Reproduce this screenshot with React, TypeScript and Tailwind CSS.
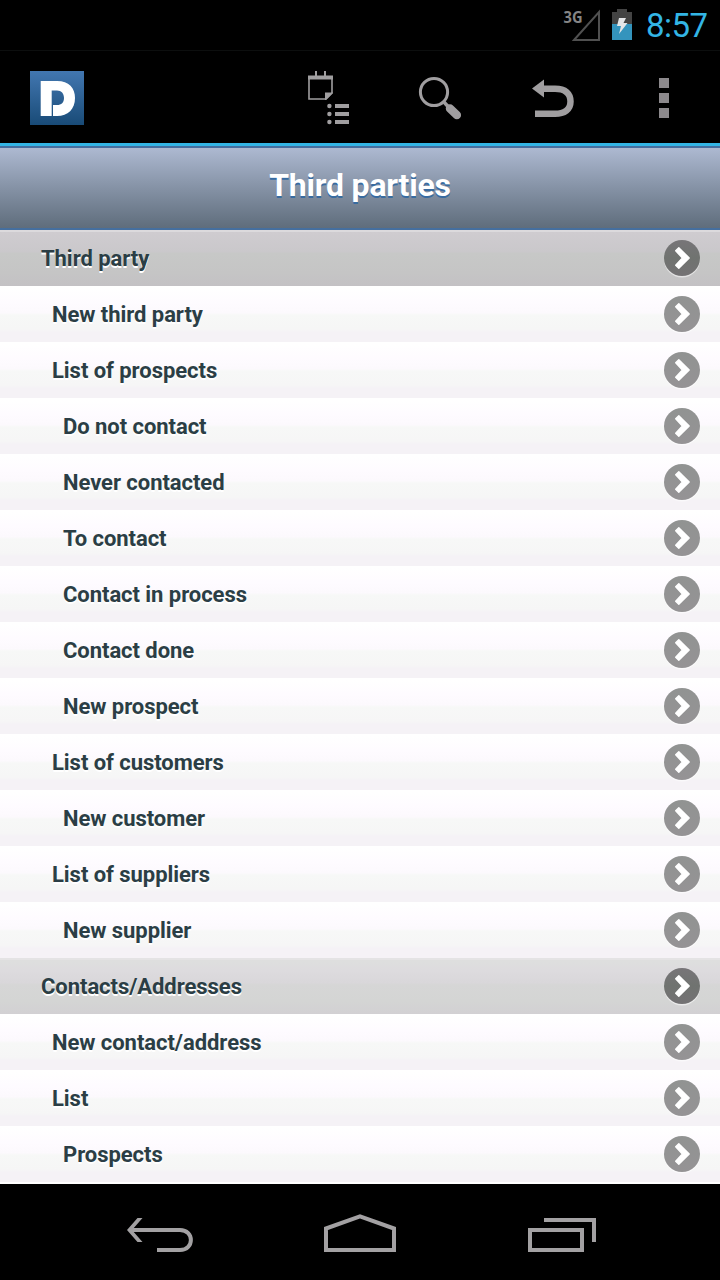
type Row = { label: string; level: 0 | 1 | 2; tone?: "active" | "section" };

const rows: Row[] = [
  { label: "Third party", level: 0, tone: "active" },
  { label: "New third party", level: 1 },
  { label: "List of prospects", level: 1 },
  { label: "Do not contact", level: 2 },
  { label: "Never contacted", level: 2 },
  { label: "To contact", level: 2 },
  { label: "Contact in process", level: 2 },
  { label: "Contact done", level: 2 },
  { label: "New prospect", level: 2 },
  { label: "List of customers", level: 1 },
  { label: "New customer", level: 2 },
  { label: "List of suppliers", level: 1 },
  { label: "New supplier", level: 2 },
  { label: "Contacts/Addresses", level: 0, tone: "section" },
  { label: "New contact/address", level: 1 },
  { label: "List", level: 1 },
  { label: "Prospects", level: 2 },
];

const indents = ["pl-[41px]", "pl-[52px]", "pl-[63px]"];

const tones = {
  active: "border-t-2 border-[#dcdadd] bg-[linear-gradient(#cfccd0,#cac8cb_36%,#c7c8c7_40%,#c5c5c5_75%,#c3c1c4)]",
  section: "border-t-2 border-[#e4e3e4] bg-[linear-gradient(#dedfde,#dddbde_20%,#d9d7da_42%,#d6d6d6_46%,#d4d5d4_75%,#d2d0d3)]",
  plain: "border-t-2 border-white bg-[linear-gradient(#fff,#fefbff_28%,#fcf9fd_46%,#f7f8f7_50%,#f6f6f6_76%,#f5f2f6_82%,#f5f2f6)]",
};

function StatusBar() {
  return (
    <div className="flex h-[51px] shrink-0 items-start border-b border-[#0c0e0e] pl-[563px]">
      <svg className="mt-1 h-[38px] w-[38px] overflow-visible" viewBox="0 -4 38 38">
        <path d="M11 32 36 4V32Z" fill="none" stroke="#505050" strokeWidth="2" />
        <text x="0.500" y="14.500" fill="#858585" fontFamily="'Open Sans', sans-serif" fontWeight="700" fontSize="16" textLength="19" lengthAdjust="spacingAndGlyphs">3G</text>
      </svg>
      <svg className="mt-[9px] ml-[11px] h-[31px] w-5" viewBox="0 0 20 31">
        <path d="M0 3H5V0H15V3H20V15H0Z" fill="#434343" />
        <path d="M0 15H20V31H0Z" fill="#3494bd" />
        <path d="M7 9H14L11.500 14H15.500L7 25L9 17H5Z" fill="#e4e6e8" />
      </svg>
      <span className="mt-[7px] ml-[14px] text-[33px] leading-[38px] font-normal tracking-[-0.5px] text-[#33b5e5]">8:57</span>
    </div>
  );
}

function ActionBar() {
  return (
    <div className="flex h-[92px] shrink-0 items-start pt-5">
      <svg className="ml-[30px] h-[54px] w-[54px]" viewBox="0 0 54 54">
        <defs>
          <linearGradient id="logo" x1="0" y1="0" x2="0" y2="1">
            <stop offset="0" stopColor="#4277b1" />
            <stop offset="1" stopColor="#194b77" />
          </linearGradient>
        </defs>
        <rect width="54" height="54" fill="url(#logo)" />
        <path d="M10.700 10H27C39 10 45 17 45 27C45 38 38 45 27 45H23V34H27C31.500 34 34 31.500 34 27C34 22.500 31.500 19.500 27 19.500H21.700V45H10.700Z" fill="white" />
      </svg>
      <svg className="ml-[223px] h-[56px] w-[44px]" viewBox="0 0 44 56" fill="#a09ea0">
        <path d="M1 4.500H26V8.500H1Z M8 0H10V5H8Z M17 0H19V5H17Z" />
        <path d="M2 7V28H19L25 22V7" fill="none" stroke="#a09ea0" strokeWidth="1.600" />
        <path d="M18 29V21.500H26V22L19 29Z" />
        <circle cx="22.400" cy="35" r="2.200" />
        <circle cx="22.400" cy="43" r="2.200" />
        <circle cx="22.400" cy="51" r="2.200" />
        <path d="M28 33H42V37H28Z M28 41H42V45H28Z M28 49H42V53H28Z" />
      </svg>
      <svg className="ml-[67px] h-[56px] w-[46px]" viewBox="0 0 46 56">
        <circle cx="16" cy="21" r="13.600" fill="none" stroke="#a09ea0" strokeWidth="3" />
        <path d="M25 30 30 35.500" stroke="#a09ea0" strokeWidth="3.500" />
        <path d="M32 37.500 38.800 44" stroke="#a09ea0" strokeWidth="8.500" strokeLinecap="round" />
      </svg>
      <svg className="ml-[68px] h-[56px] w-[44px]" viewBox="0 0 44 56">
        <path d="M0 17.500 12 8.500V26.500Z" fill="#a09ea0" />
        <path d="M11 17.700H23C33.500 17.700 38.500 22.500 38.500 30.500C38.500 38.500 32.500 42.800 23 42.800H3" fill="none" stroke="#a09ea0" strokeWidth="6.500" />
      </svg>
      <svg className="mt-[7px] ml-[83px] h-[40px] w-[10px]" viewBox="0 0 10 40">
        <path d="M0 0H10V10H0Z M0 15H10V25H0Z M0 30H10V40H0Z" fill="#8c898c" />
      </svg>
    </div>
  );
}

function Chevron({ dark }: { dark: boolean }) {
  return (
    <svg className="mr-5 h-[38px] w-9 shrink-0" viewBox="0 0 36 38">
      <defs>
        <linearGradient id="disc-dark" x1="0" y1="0" x2="0" y2="1">
          <stop offset="0" stopColor="#777578" />
          <stop offset=".5" stopColor="#707370" />
          <stop offset="1" stopColor="#747274" />
        </linearGradient>
        <linearGradient id="disc-light" x1="0" y1="0" x2="0" y2="1">
          <stop offset="0" stopColor="#919392" />
          <stop offset="1" stopColor="#959395" />
        </linearGradient>
      </defs>
      <circle cx="18" cy="19.500" r="18" fill="white" fillOpacity=".5" />
      <circle cx="18" cy="18" r="18" fill={dark ? "url(#disc-dark)" : "url(#disc-light)"} />
      <path d="M11.700 10.700 14.800 7.700 25.200 18 14.800 28.300 11.700 25.300 18.400 18Z" fill="white" stroke="white" strokeWidth="1.400" strokeLinejoin="round" />
    </svg>
  );
}

function MenuRow({ label, level, tone }: Row) {
  return (
    <li className={`flex h-14 shrink-0 items-center justify-between ${indents[level]} ${tones[tone ?? "plain"]}`}>
      <span className="text-[22px] leading-7 font-bold tracking-[-0.05px] whitespace-nowrap text-[#2b3e45] [text-shadow:0_2px_0_#fff]">{label}</span>
      <Chevron dark={tone !== undefined} />
    </li>
  );
}

function NavigationBar() {
  return (
    <div className="flex h-24 shrink-0 items-start bg-black pt-[30px]">
      <svg className="ml-[126px] h-[38px] w-[68px]" viewBox="0 0 68 38">
        <path d="M4 16H54C68.500 16 68.500 36 54 36H31" fill="none" stroke="#a3a1a3" strokeWidth="4" />
        <path d="M11.500 4H16.500L6 16 16.500 28H11.500L1 16Z" fill="#a3a1a3" />
      </svg>
      <svg className="ml-[130px] h-[38px] w-[72px]" viewBox="0 0 72 38">
        <path d="M2 36V14.500L36 2.300 70 14.500V36Z" fill="none" stroke="#a3a1a3" strokeWidth="4" />
      </svg>
      <svg className="ml-[132px] h-[38px] w-[68px]" viewBox="0 0 68 38">
        <path d="M2 16H54V36H2Z M16 6H66V28" fill="none" stroke="#a3a1a3" strokeWidth="4" />
      </svg>
    </div>
  );
}

export default function App() {
  return (
    <div className="flex h-[1280px] w-[720px] flex-col overflow-hidden bg-black font-['Roboto',sans-serif]">
      <StatusBar />
      <ActionBar />
      <header className="flex h-[87px] shrink-0 flex-col border-t-[3px] border-[#33b5e5]">
        <div className="flex h-[84px] items-center justify-center border-y-2 border-[#456f9f] bg-linear-to-b from-[#adb9d1] to-[#5f6d7c] pb-[6px]">
          <h1 className="text-[32px] leading-10 font-bold tracking-[-0.2px] text-white [text-shadow:0_2px_0_#386ba0]">Third parties</h1>
        </div>
      </header>
      <ul className="flex h-[954px] shrink-0 flex-col bg-white">
        {rows.map((row) => (
          <MenuRow key={row.label} {...row} />
        ))}
      </ul>
      <NavigationBar />
    </div>
  );
}
